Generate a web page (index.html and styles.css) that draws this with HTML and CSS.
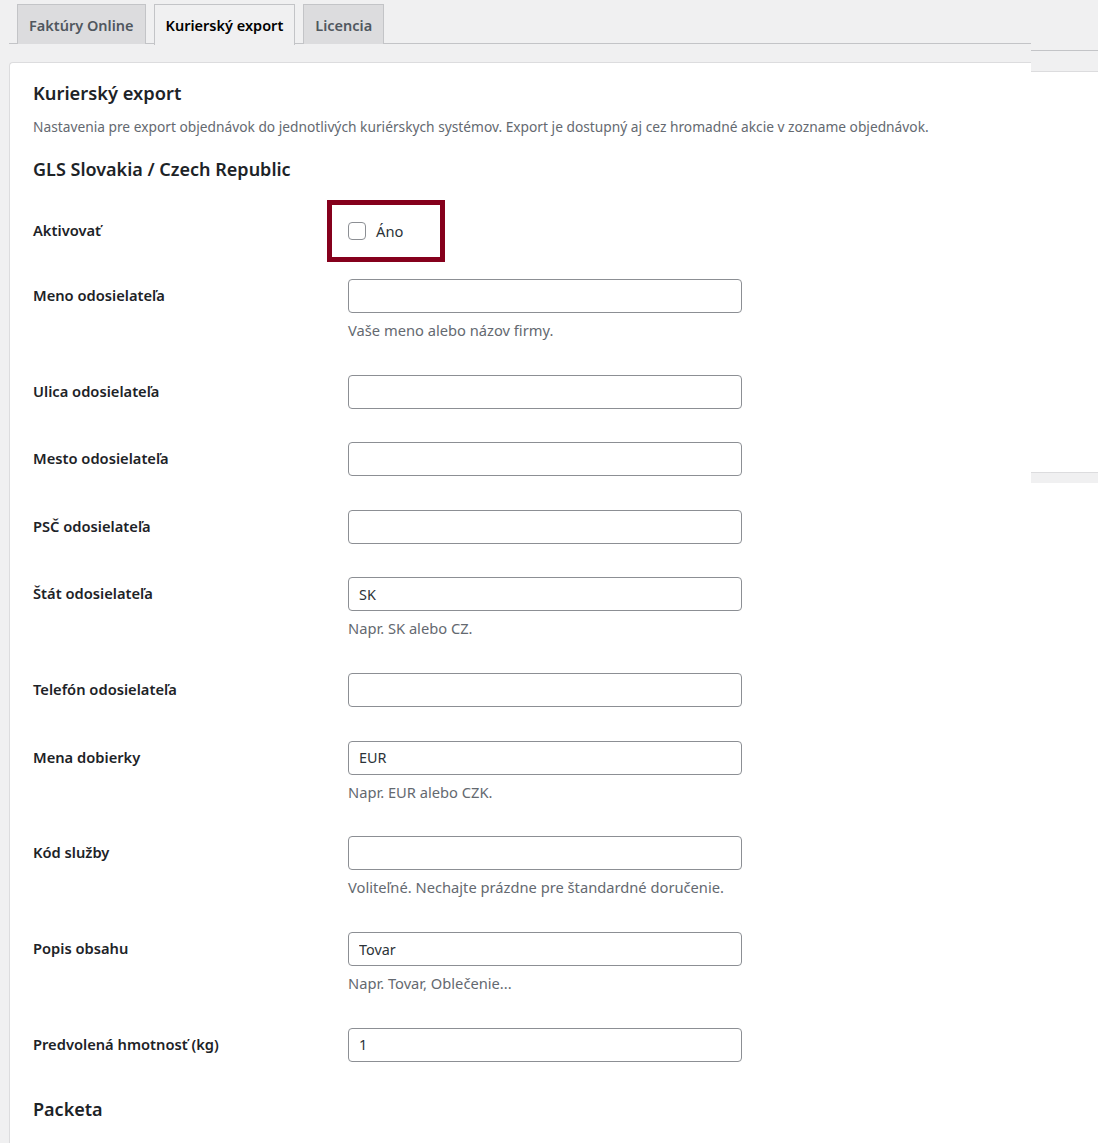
FILE: index.html
```html
<!DOCTYPE html>
<html>

<head>
    <title>Kuriérsky export</title>
    <link rel="stylesheet" href="styles.css">
</head>

<body>
    <div class="page">
        <div class="main">
            <nav class="nav-tabs">
                <a class="nav-tab" href="#">Faktúry Online</a>
                <a class="nav-tab nav-tab-active" href="#">Kurierský export</a>
                <a class="nav-tab" href="#">Licencia</a>
            </nav>

            <div class="card">
                <h2 class="card-title">Kurierský export</h2>
                <p class="card-intro">Nastavenia pre export objednávok do jednotlivých kuriérskych systémov. Export je dostupný aj cez hromadné akcie v zozname objednávok.</p>

                <h3 class="section-title">GLS Slovakia / Czech Republic</h3>

                <table class="form-table">
                    <tbody>
                        <tr class="row-check">
                            <th>Aktivovať</th>
                            <td>
                                <label class="check-label"><span class="checkbox"></span>Áno</label>
                                <!-- highlight marker over the option -->
                                <span class="highlight"></span>
                            </td>
                        </tr>
                        <tr>
                            <th>Meno odosielateľa</th>
                            <td>
                                <input class="text-input" type="text" value="">
                                <p class="description">Vaše meno alebo názov firmy.</p>
                            </td>
                        </tr>
                        <tr>
                            <th>Ulica odosielateľa</th>
                            <td><input class="text-input" type="text" value=""></td>
                        </tr>
                        <tr>
                            <th>Mesto odosielateľa</th>
                            <td><input class="text-input" type="text" value=""></td>
                        </tr>
                        <tr>
                            <th>PSČ odosielateľa</th>
                            <td><input class="text-input" type="text" value=""></td>
                        </tr>
                        <tr>
                            <th>Štát odosielateľa</th>
                            <td>
                                <input class="text-input" type="text" value="SK">
                                <p class="description">Napr. SK alebo CZ.</p>
                            </td>
                        </tr>
                        <tr>
                            <th>Telefón odosielateľa</th>
                            <td><input class="text-input" type="text" value=""></td>
                        </tr>
                        <tr>
                            <th>Mena dobierky</th>
                            <td>
                                <input class="text-input" type="text" value="EUR">
                                <p class="description">Napr. EUR alebo CZK.</p>
                            </td>
                        </tr>
                        <tr>
                            <th>Kód služby</th>
                            <td>
                                <input class="text-input" type="text" value="">
                                <p class="description">Voliteľné. Nechajte prázdne pre štandardné doručenie.</p>
                            </td>
                        </tr>
                        <tr>
                            <th>Popis obsahu</th>
                            <td>
                                <input class="text-input" type="text" value="Tovar">
                                <p class="description">Napr. Tovar, Oblečenie...</p>
                            </td>
                        </tr>
                        <tr>
                            <th>Predvolená hmotnosť (kg)</th>
                            <td><input class="text-input" type="text" value="1"></td>
                        </tr>
                    </tbody>
                </table>

                <h3 class="section-title section-next">Packeta</h3>
            </div>
        </div>

        <!-- neighbouring panel cut off at the right edge -->
        <div class="side">
            <div class="side-top"></div>
            <div class="side-bar"></div>
            <div class="side-panel"></div>
            <div class="side-bar side-bar-small"></div>
            <div class="side-rest"></div>
        </div>
    </div>
</body>

</html>
```

FILE: styles.css
```css
body {
    font-family: "Noto Sans", "Open Sans", Arial, sans-serif;
    background-color: #f0f0f1;
    color: #1d2327;
    margin: 0;
    padding: 0;
}

.page {
    display: flex;
    min-height: 1143px;
}

.main {
    width: 1022px;
    padding-left: 9px;
    display: flex;
    flex-direction: column;
}

/* Tabs */
.nav-tabs {
    display: flex;
    padding-top: 4px;
    border-bottom: 1px solid #c3c4c7;
    height: 39px;
}

.nav-tab {
    display: block;
    margin-left: 8px;
    padding: 0 11px;
    height: 39px;
    line-height: 41px;
    font-size: 14.5px;
    font-weight: 600;
    color: #50575e;
    text-decoration: none;
    background-color: #dcdcde;
    border: 1px solid #c3c4c7;
    border-bottom: none;
}

.nav-tab-active {
    background-color: #f0f0f1;
    color: #000;
    height: 40px;
    margin-bottom: -1px;
}

/* Card */
.card {
    flex: 1;
    margin-top: 18px;
    background-color: #fff;
    border-top: 1px solid #dcdcde;
    border-left: 1px solid #dcdcde;
    border-top-left-radius: 4px;
    padding: 18px 23px 0 23px;
}

.card-title {
    font-size: 18.3px;
    font-weight: 600;
    line-height: 24px;
    margin: 0;
}

.card-intro {
    font-size: 13.75px;
    line-height: 20px;
    color: #646970;
    margin: 12px 0 0 0;
}

.section-title {
    font-size: 18px;
    font-weight: 600;
    line-height: 24px;
    margin: 20px 0 0 0;
}

.section-next {
    margin-top: 18px;
}

/* Form table */
.form-table {
    border-collapse: collapse;
    margin-top: 19px;
}

.form-table th {
    width: 305px;
    padding: 22px 10px 0 0;
    text-align: left;
    vertical-align: top;
    font-size: 14.7px;
    font-weight: 600;
    line-height: 20px;
}

.form-table td {
    padding: 16px 10px 17.5px 0;
    vertical-align: top;
}

.row-check th {
    padding-top: 20px;
}

.row-check td {
    position: relative;
    padding-top: 21px;
    padding-bottom: 22px;
}

.check-label {
    display: flex;
    align-items: center;
    font-size: 14.7px;
    line-height: 20px;
    color: #2c3338;
}

.checkbox {
    width: 16px;
    height: 16px;
    border: 1px solid #8c8f94;
    border-radius: 4px;
    margin-right: 10px;
    background-color: #fff;
}

.highlight {
    position: absolute;
    left: -21px;
    top: 0;
    width: 108px;
    height: 52px;
    border: 5px solid #85001c;
}

.text-input {
    display: block;
    box-sizing: border-box;
    width: 394px;
    height: 34px;
    margin: 0;
    padding: 0 10px;
    font-family: inherit;
    font-size: 14.4px;
    color: #2c3338;
    border: 1px solid #8c8f94;
    border-radius: 4px;
    background-color: #fff;
}

.description {
    margin: 6px 0 0 0;
    font-size: 14.7px;
    line-height: 22.25px;
    color: #646970;
}

/* Right-hand strip */
.side {
    flex: 1;
    display: flex;
    flex-direction: column;
}

.side-top {
    height: 50px;
    border-bottom: 1px solid #c3c4c7;
}

.side-bar {
    height: 20px;
    border-bottom: 1px solid #dcdcde;
}

.side-panel {
    height: 400px;
    background-color: #fff;
    border-bottom: 1px solid #dcdcde;
}

.side-bar-small {
    height: 10px;
    border-bottom: none;
}

.side-rest {
    flex: 1;
    background-color: #fff;
}
```
